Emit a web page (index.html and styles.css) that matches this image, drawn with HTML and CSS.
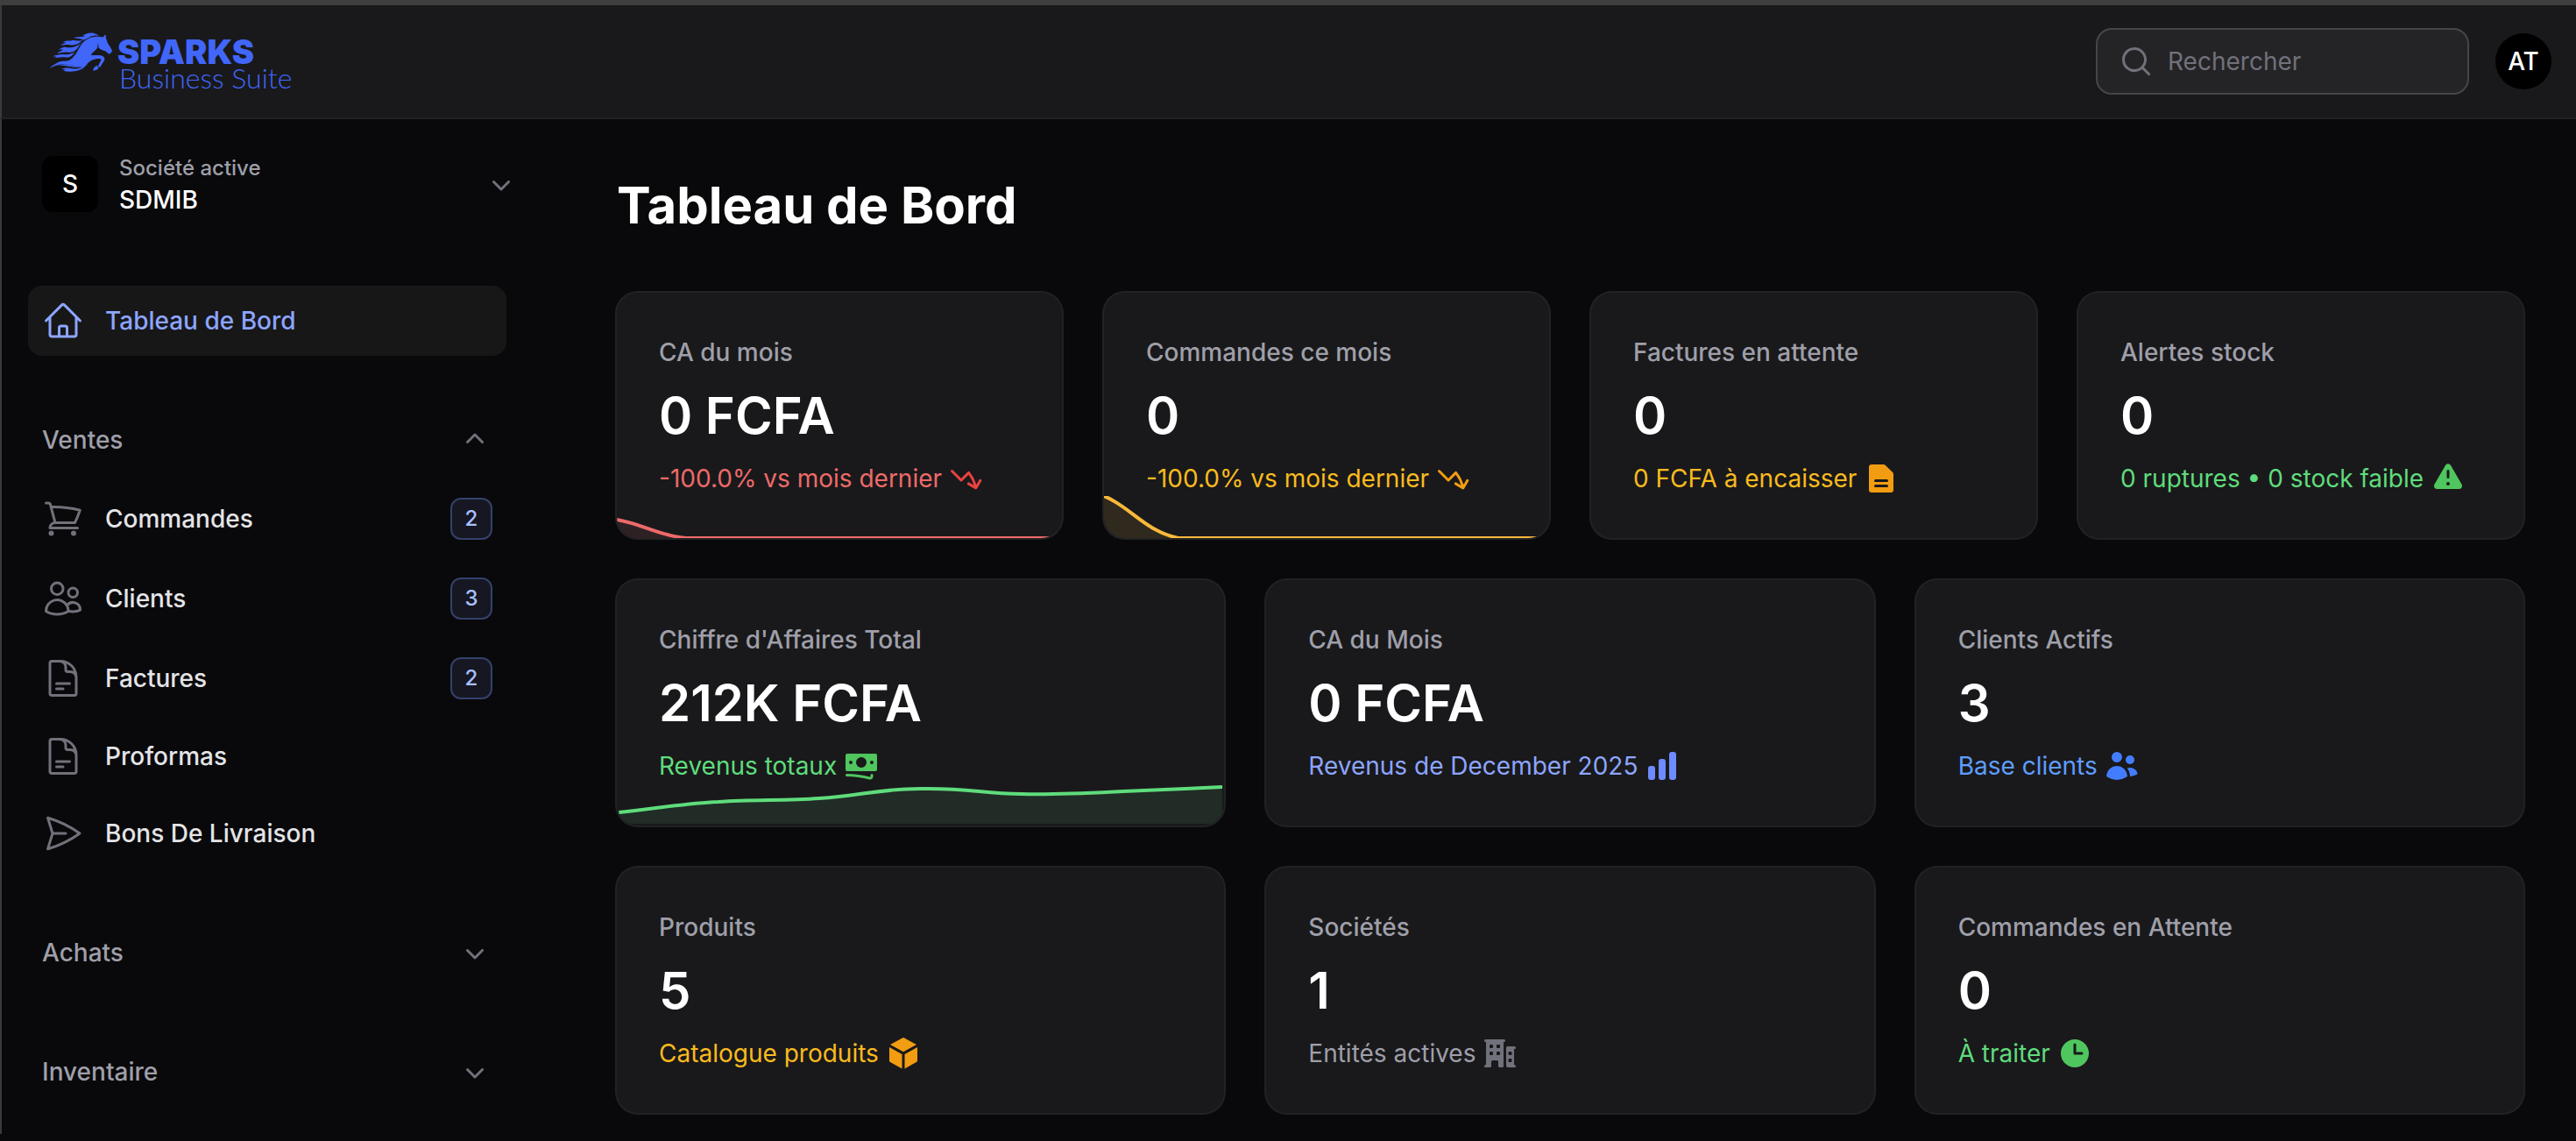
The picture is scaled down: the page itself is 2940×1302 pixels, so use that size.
FILE: index.html
```html
<!DOCTYPE html>
<html lang="fr">
<head>
    <meta charset="UTF-8">
    <meta name="viewport" content="width=device-width, initial-scale=1.0">
    <title>Tableau de Bord - Sparks Business Suite</title>
    <link rel="stylesheet" href="styles.css">
</head>
<body>
    <svg class="icon-defs" aria-hidden="true">
        <symbol id="chevron-down" viewBox="0 0 20 20">
            <path d="M5.22 8.22a.75.75 0 0 1 1.06 0L10 11.94l3.72-3.72a.75.75 0 1 1 1.06 1.06l-4.25 4.25a.75.75 0 0 1-1.06 0L5.22 9.28a.75.75 0 0 1 0-1.06Z"/>
        </symbol>
        <symbol id="chevron-up" viewBox="0 0 20 20">
            <path d="M9.47 6.47a.75.75 0 0 1 1.06 0l4.25 4.25a.75.75 0 1 1-1.06 1.06L10 8.06l-3.72 3.72a.75.75 0 0 1-1.06-1.06l4.25-4.25Z"/>
        </symbol>
        <symbol id="trending-down" viewBox="0 0 20 20">
            <path d="M1.22 5.222a.75.75 0 0 1 1.06 0L7 9.942l3.768-3.769a.75.75 0 0 1 1.113.058 20.908 20.908 0 0 1 3.813 7.254l1.574-2.727a.75.75 0 0 1 1.3.75l-2.475 4.286a.75.75 0 0 1-1.025.275l-4.287-2.475a.75.75 0 0 1 .75-1.3l2.71 1.565a19.422 19.422 0 0 0-3.013-6.024L7.53 11.533a.75.75 0 0 1-1.06 0l-5.25-5.25a.75.75 0 0 1 0-1.06Z"/>
        </symbol>
        <symbol id="document" viewBox="0 0 24 24">
            <path d="M19.5 14.25v-2.625a3.375 3.375 0 0 0-3.375-3.375h-1.5A1.125 1.125 0 0 1 13.5 7.125v-1.5a3.375 3.375 0 0 0-3.375-3.375H8.25m0 12.75h7.5m-7.5 3H12M10.5 2.25H5.625c-.621 0-1.125.504-1.125 1.125v17.25c0 .621.504 1.125 1.125 1.125h12.75c.621 0 1.125-.504 1.125-1.125V11.25a9 9 0 0 0-9-9Z"/>
        </symbol>
    </svg>

    <header class="topbar">
        <a class="logo" href="#">
            <svg class="logo-mark" viewBox="20 20 222 142" aria-hidden="true">
                <path d="M212 31 L215 32 L215 42 C218 49 219 55 223 62 C228 70 233 77 236 84 C237 89 235 92 232 93 C230 97 226 98 222 95 C217 89 211 85 203 84 C198 82 193 79 189 75 C191 70 190 65 186 61 C188 68 187 75 182 82 C175 88 168 94 163 101 C176 102 190 101 201 103 C209 106 213 112 210 119 C206 127 200 134 196 142 L190 141 L188 150 L172 156 C170 149 174 144 179 140 L185 137 L188 142 C189 133 196 126 199 117 C195 111 181 115 172 117 C158 121 150 136 137 139 C118 142 99 134 80 134 C65 133 55 132 43 133 C55 125 70 126 84 122 C95 117 103 108 112 96 C122 81 128 62 145 50 C160 39 183 34 205 40 Z"/>
                <path d="M192 35 C182 28 174 24 160 25 C147 25 142 32 132 33 L143 35 C136 40 123 37 105 41 C117 46 125 43 132 47 C151 49 156 35 175 34 C182 33 188 34 192 35 Z"/>
                <path d="M165 38 C153 38 145 46 133 50 C120 54 105 48 94 52 C82 51 72 51 67 58 L79 57 C72 61 63 63 58 67 C72 67 83 63 96 67 C115 68 124 59 133 52 C143 47 152 42 165 38 Z"/>
                <path d="M131 58 C119 70 106 74 91 75 C82 77 72 71 64 76 L52 82 L68 82 C62 89 53 89 47 95 C61 94 72 89 87 92 C105 91 115 83 121 71 Z"/>
                <path d="M110 87 C101 98 86 99 74 99 C56 97 47 101 31 105 L46 106 L37 111 C55 110 67 108 78 109 C93 110 103 100 110 87 Z"/>
                <path d="M92 119 C75 124 56 120 47 128 C39 134 29 136 22 146 C36 140 45 134 60 136 C85 137 107 147 134 142 C119 150 104 149 90 146 C80 145 70 147 61 149 L75 151 L68 155 C86 160 108 158 123 153 C137 148 145 139 153 130 C137 141 116 139 98 136 C79 132 61 135 46 132 C62 126 79 129 92 119 Z"/>
            </svg>
            <span class="logo-text">
                <span class="logo-name">SPARKS</span>
                <span class="logo-suite">Business Suite</span>
            </span>
        </a>
        <div class="topbar-end">
            <label class="search">
                <svg class="icon" viewBox="0 0 20 20" aria-hidden="true">
                    <path fill-rule="evenodd" d="M9 3.5a5.5 5.5 0 1 0 0 11 5.5 5.5 0 0 0 0-11ZM2 9a7 7 0 1 1 12.452 4.391l3.328 3.329a.75.75 0 1 1-1.06 1.06l-3.329-3.328A7 7 0 0 1 2 9Z"/>
                </svg>
                <input type="search" placeholder="Rechercher" aria-label="Rechercher">
            </label>
            <button class="avatar" type="button">AT</button>
        </div>
    </header>

    <div class="layout">
        <aside class="sidebar">
            <button class="tenant" type="button">
                <span class="tenant-avatar">S</span>
                <span class="tenant-text">
                    <span class="tenant-label">Société active</span>
                    <span class="tenant-name">SDMIB</span>
                </span>
                <svg class="icon" aria-hidden="true"><use href="#chevron-down"/></svg>
            </button>

            <nav class="nav">
                <a class="nav-item active" href="#">
                    <svg class="nav-icon" viewBox="0 0 24 24" aria-hidden="true">
                        <path d="m2.25 12 8.954-8.955c.44-.439 1.152-.439 1.591 0L21.75 12M4.5 9.75v10.125c0 .621.504 1.125 1.125 1.125H9.75v-4.875c0-.621.504-1.125 1.125-1.125h2.25c.621 0 1.125.504 1.125 1.125V21h4.125c.621 0 1.125-.504 1.125-1.125V9.75M8.25 21h8.25"/>
                    </svg>
                    <span>Tableau de Bord</span>
                </a>

                <div class="nav-group">
                    <button class="nav-heading" type="button" aria-expanded="true">
                        <span>Ventes</span>
                        <svg class="icon" aria-hidden="true"><use href="#chevron-up"/></svg>
                    </button>
                    <a class="nav-item has-badge" href="#">
                        <svg class="nav-icon" viewBox="0 0 24 24" aria-hidden="true">
                            <path d="M2.25 3h1.386c.51 0 .955.343 1.087.835l.383 1.437M7.5 14.25a3 3 0 0 0-3 3h15.75m-12.75-3h11.218c1.121-2.3 2.1-4.684 2.924-7.138a60.114 60.114 0 0 0-16.536-1.84M7.5 14.25 5.106 5.272M6 20.25a.75.75 0 1 1-1.5 0 .75.75 0 0 1 1.5 0Zm12.75 0a.75.75 0 1 1-1.5 0 .75.75 0 0 1 1.5 0Z"/>
                        </svg>
                        <span>Commandes</span>
                        <span class="badge">2</span>
                    </a>
                    <a class="nav-item has-badge" href="#">
                        <svg class="nav-icon" viewBox="0 0 24 24" aria-hidden="true">
                            <path d="M15 19.128a9.38 9.38 0 0 0 2.625.372 9.337 9.337 0 0 0 4.121-.952 4.125 4.125 0 0 0-7.533-2.493M15 19.128v-.003c0-1.113-.285-2.16-.786-3.07M15 19.128v.106A12.318 12.318 0 0 1 8.624 21c-2.331 0-4.512-.645-6.374-1.766l-.001-.109a6.375 6.375 0 0 1 11.964-3.07M12 6.375a3.375 3.375 0 1 1-6.75 0 3.375 3.375 0 0 1 6.75 0Zm8.25 2.25a2.625 2.625 0 1 1-5.25 0 2.625 2.625 0 0 1 5.25 0Z"/>
                        </svg>
                        <span>Clients</span>
                        <span class="badge">3</span>
                    </a>
                    <a class="nav-item has-badge" href="#">
                        <svg class="nav-icon" aria-hidden="true"><use href="#document"/></svg>
                        <span>Factures</span>
                        <span class="badge">2</span>
                    </a>
                    <a class="nav-item" href="#">
                        <svg class="nav-icon" aria-hidden="true"><use href="#document"/></svg>
                        <span>Proformas</span>
                    </a>
                    <a class="nav-item" href="#">
                        <svg class="nav-icon" viewBox="0 0 24 24" aria-hidden="true">
                            <path d="M6 12 3.269 3.125A59.769 59.769 0 0 1 21.485 12 59.768 59.768 0 0 1 3.27 20.875L5.999 12Zm0 0h7.5"/>
                        </svg>
                        <span>Bons De Livraison</span>
                    </a>
                </div>

                <button class="nav-heading" type="button" aria-expanded="false">
                    <span>Achats</span>
                    <svg class="icon" aria-hidden="true"><use href="#chevron-down"/></svg>
                </button>

                <button class="nav-heading" type="button" aria-expanded="false">
                    <span>Inventaire</span>
                    <svg class="icon" aria-hidden="true"><use href="#chevron-down"/></svg>
                </button>
            </nav>
        </aside>

        <main class="main">
            <h1>Tableau de Bord</h1>

            <section class="stats stats-4">
                <article class="card danger">
                    <h2>CA du mois</h2>
                    <p class="value">0 FCFA</p>
                    <p class="description">
                        <span>-100.0% vs mois dernier</span>
                        <svg class="icon" aria-hidden="true"><use href="#trending-down"/></svg>
                    </p>
                    <svg class="chart" viewBox="0 0 600 48" preserveAspectRatio="none" aria-hidden="true">
                        <path class="chart-fill" d="M0 27 C35 32 65 48 100 48 H0 Z"/>
                        <path class="chart-line" d="M0 27 C35 32 65 48 100 48 H600"/>
                    </svg>
                </article>
                <article class="card warning">
                    <h2>Commandes ce mois</h2>
                    <p class="value">0</p>
                    <p class="description">
                        <span>-100.0% vs mois dernier</span>
                        <svg class="icon" aria-hidden="true"><use href="#trending-down"/></svg>
                    </p>
                    <svg class="chart" viewBox="0 0 600 48" preserveAspectRatio="none" aria-hidden="true">
                        <path class="chart-fill" d="M0 0 C35 12 55 40 100 48 H0 Z"/>
                        <path class="chart-line" d="M0 0 C35 12 55 40 100 48 H600"/>
                    </svg>
                </article>
                <article class="card warning">
                    <h2>Factures en attente</h2>
                    <p class="value">0</p>
                    <p class="description">
                        <span>0 FCFA à encaisser</span>
                        <svg class="icon" viewBox="0 0 20 20" aria-hidden="true">
                            <path fill-rule="evenodd" d="M4.5 2A1.5 1.5 0 0 0 3 3.5v13A1.5 1.5 0 0 0 4.5 18h11a1.5 1.5 0 0 0 1.5-1.5V7.621a1.5 1.5 0 0 0-.44-1.06l-4.12-4.122A1.5 1.5 0 0 0 11.378 2H4.5Zm2.25 8.5a.75.75 0 0 0 0 1.5h6.5a.75.75 0 0 0 0-1.5h-6.5Zm0 3a.75.75 0 0 0 0 1.5h6.5a.75.75 0 0 0 0-1.5h-6.5Z"/>
                        </svg>
                    </p>
                </article>
                <article class="card success">
                    <h2>Alertes stock</h2>
                    <p class="value">0</p>
                    <p class="description">
                        <span>0 ruptures • 0 stock faible</span>
                        <svg class="icon" viewBox="0 0 20 20" aria-hidden="true">
                            <path fill-rule="evenodd" d="M8.485 2.495c.673-1.167 2.357-1.167 3.03 0l6.28 10.875c.673 1.167-.17 2.625-1.516 2.625H3.72c-1.347 0-2.189-1.458-1.515-2.625L8.485 2.495ZM10 5a.75.75 0 0 1 .75.75v3.5a.75.75 0 0 1-1.5 0v-3.5A.75.75 0 0 1 10 5Zm0 9a1 1 0 1 0 0-2 1 1 0 0 0 0 2Z"/>
                        </svg>
                    </p>
                </article>
            </section>

            <section class="stats stats-3">
                <article class="card success">
                    <h2>Chiffre d'Affaires Total</h2>
                    <p class="value">212K FCFA</p>
                    <p class="description">
                        <span>Revenus totaux</span>
                        <svg class="icon" viewBox="0 0 20 20" aria-hidden="true">
                            <path fill-rule="evenodd" d="M1 4a1 1 0 0 1 1-1h16a1 1 0 0 1 1 1v8a1 1 0 0 1-1 1H2a1 1 0 0 1-1-1V4Zm12 4a3 3 0 1 1-6 0 3 3 0 0 1 6 0ZM4 9a1 1 0 1 0 0-2 1 1 0 0 0 0 2Zm13-1a1 1 0 1 1-2 0 1 1 0 0 1 2 0ZM1.75 14.5a.75.75 0 0 0 0 1.5c4.417 0 8.693.603 12.749 1.73 1.111.309 2.251-.512 2.251-1.696v-.784a.75.75 0 0 0-1.5 0v.784a.272.272 0 0 1-.35.25A49.043 49.043 0 0 0 1.75 14.5Z"/>
                        </svg>
                    </p>
                    <svg class="chart" viewBox="0 0 600 48" preserveAspectRatio="none" aria-hidden="true">
                        <path class="chart-fill" d="M2 33 C35 29 65 23 100 21 C135 18 165 20 200 17 C240 14 260 6 300 6 C350 5 360 12 400 12 C435 13 465 11 500 9 C535 7 565 6 598 4 V46 H2 Z"/>
                        <path class="chart-line" d="M2 33 C35 29 65 23 100 21 C135 18 165 20 200 17 C240 14 260 6 300 6 C350 5 360 12 400 12 C435 13 465 11 500 9 C535 7 565 6 598 4"/>
                    </svg>
                </article>
                <article class="card primary">
                    <h2>CA du Mois</h2>
                    <p class="value">0 FCFA</p>
                    <p class="description">
                        <span>Revenus de December 2025</span>
                        <svg class="icon" viewBox="0 0 20 20" aria-hidden="true">
                            <path d="M15.5 2A1.5 1.5 0 0 0 14 3.5v13a1.5 1.5 0 0 0 1.5 1.5h1a1.5 1.5 0 0 0 1.5-1.5v-13A1.5 1.5 0 0 0 16.5 2h-1ZM9.5 6A1.5 1.5 0 0 0 8 7.5v9A1.5 1.5 0 0 0 9.5 18h1a1.5 1.5 0 0 0 1.5-1.5v-9A1.5 1.5 0 0 0 10.5 6h-1ZM3.5 10A1.5 1.5 0 0 0 2 11.5v5A1.5 1.5 0 0 0 3.5 18h1A1.5 1.5 0 0 0 6 16.5v-5A1.5 1.5 0 0 0 4.5 10h-1Z"/>
                        </svg>
                    </p>
                </article>
                <article class="card info">
                    <h2>Clients Actifs</h2>
                    <p class="value">3</p>
                    <p class="description">
                        <span>Base clients</span>
                        <svg class="icon" viewBox="0 0 20 20" aria-hidden="true">
                            <path d="M7 8a3 3 0 1 0 0-6 3 3 0 0 0 0 6ZM14.5 9a2.5 2.5 0 1 0 0-5 2.5 2.5 0 0 0 0 5ZM1.615 16.428a1.224 1.224 0 0 1-.569-1.175 6.002 6.002 0 0 1 11.908 0c.058.467-.172.92-.57 1.174A9.953 9.953 0 0 1 7 18a9.953 9.953 0 0 1-5.385-1.572ZM14.5 16h-.106c.07-.297.088-.611.048-.933a7.47 7.47 0 0 0-1.588-3.755 4.502 4.502 0 0 1 5.874 2.636.818.818 0 0 1-.36.98A7.465 7.465 0 0 1 14.5 16Z"/>
                        </svg>
                    </p>
                </article>
                <article class="card warning">
                    <h2>Produits</h2>
                    <p class="value">5</p>
                    <p class="description">
                        <span>Catalogue produits</span>
                        <svg class="icon" viewBox="0 0 20 20" aria-hidden="true">
                            <path d="M10.362 1.093a.75.75 0 0 0-.724 0L2.523 5.018 10 9.143l7.477-4.125-7.115-3.925ZM18 6.443l-7.25 4v8.25l6.862-3.786A.75.75 0 0 0 18 14.25V6.443ZM9.25 18.693v-8.25l-7.25-4v7.807a.75.75 0 0 0 .388.657l6.862 3.786Z"/>
                        </svg>
                    </p>
                </article>
                <article class="card gray">
                    <h2>Sociétés</h2>
                    <p class="value">1</p>
                    <p class="description">
                        <span>Entités actives</span>
                        <svg class="icon" viewBox="0 0 20 20" aria-hidden="true">
                            <path fill-rule="evenodd" d="M1 2.75A.75.75 0 0 1 1.75 2h10.5a.75.75 0 0 1 0 1.5H12v13.75a.75.75 0 0 1-.75.75h-1.5a.75.75 0 0 1-.75-.75v-2.5a.75.75 0 0 0-.75-.75h-2.5a.75.75 0 0 0-.75.75v2.5a.75.75 0 0 1-.75.75h-2.5a.75.75 0 0 1 0-1.5H2v-13h-.25A.75.75 0 0 1 1 2.75ZM4 5.5a.5.5 0 0 1 .5-.5h1a.5.5 0 0 1 .5.5v1a.5.5 0 0 1-.5.5h-1a.5.5 0 0 1-.5-.5v-1ZM4.5 9a.5.5 0 0 0-.5.5v1a.5.5 0 0 0 .5.5h1a.5.5 0 0 0 .5-.5v-1a.5.5 0 0 0-.5-.5h-1ZM8 5.5a.5.5 0 0 1 .5-.5h1a.5.5 0 0 1 .5.5v1a.5.5 0 0 1-.5.5h-1a.5.5 0 0 1-.5-.5v-1ZM8.5 9a.5.5 0 0 0-.5.5v1a.5.5 0 0 0 .5.5h1a.5.5 0 0 0 .5-.5v-1a.5.5 0 0 0-.5-.5h-1ZM14.25 6a.75.75 0 0 0-.75.75V17a1 1 0 0 0 1 1h3.75a.75.75 0 0 0 0-1.5H18v-9h.25a.75.75 0 0 0 0-1.5h-4Zm.5 3.5a.5.5 0 0 1 .5-.5h1a.5.5 0 0 1 .5.5v1a.5.5 0 0 1-.5.5h-1a.5.5 0 0 1-.5-.5v-1Zm.5 3.5a.5.5 0 0 0-.5.5v1a.5.5 0 0 0 .5.5h1a.5.5 0 0 0 .5-.5v-1a.5.5 0 0 0-.5-.5h-1Z"/>
                        </svg>
                    </p>
                </article>
                <article class="card success">
                    <h2>Commandes en Attente</h2>
                    <p class="value">0</p>
                    <p class="description">
                        <span>À traiter</span>
                        <svg class="icon" viewBox="0 0 20 20" aria-hidden="true">
                            <path fill-rule="evenodd" d="M10 18a8 8 0 1 0 0-16 8 8 0 0 0 0 16Zm.75-13a.75.75 0 0 0-1.5 0v5c0 .414.336.75.75.75h4a.75.75 0 0 0 0-1.5h-3.25V5Z"/>
                        </svg>
                    </p>
                </article>
            </section>
        </main>
    </div>
</body>
</html>
```

FILE: styles.css
```css
* {
    box-sizing: border-box;
}
body {
    margin: 0;
    min-height: 100vh;
    border-top: 6px solid #3f3f3f;
    background-color: #09090b;
    color: #ffffff;
    font-family: Inter, sans-serif;
    font-size: 28px;
    line-height: 40px;
}
h1, h2, p {
    margin: 0;
}
a {
    color: inherit;
    text-decoration: none;
}
button {
    border: none;
    background: none;
    color: inherit;
    font: inherit;
    text-align: left;
    cursor: pointer;
}
.icon-defs {
    display: none;
}
.icon {
    flex: none;
    width: 40px;
    height: 40px;
    fill: #71717b;
}

/* Top bar */
.topbar {
    display: flex;
    align-items: center;
    justify-content: space-between;
    height: 130px;
    padding: 0 28px 0 54px;
    border-bottom: 2px solid #222224;
    border-left: 2px solid #3a3a3a;
    background-color: #19191b;
}
.logo {
    display: flex;
    align-items: flex-start;
    gap: 4px;
    color: #4166fa;
}
.logo-mark {
    width: 74px;
    height: 47px;
    fill: currentColor;
}
.logo-text {
    display: flex;
    flex-direction: column;
    padding-top: 8px;
}
.logo-name {
    font-size: 38px;
    font-weight: 900;
    line-height: 30px;
}
.logo-suite {
    padding-left: 2px;
    font-family: Lato, sans-serif;
    font-size: 32px;
    font-weight: 300;
    line-height: 30px;
}
.topbar-end {
    display: flex;
    align-items: center;
    gap: 30px;
}
.search {
    display: flex;
    align-items: center;
    gap: 16px;
    width: 426px;
    height: 76px;
    padding: 0 24px;
    border: 2px solid #464649;
    border-radius: 18px;
    background-color: #242427;
}
.search input {
    flex: 1;
    min-width: 0;
    padding: 0;
    border: none;
    outline: none;
    background: none;
    color: #ffffff;
    font: inherit;
}
.search input::placeholder {
    color: #71717b;
}
.avatar {
    width: 64px;
    height: 64px;
    padding: 0;
    border-radius: 50%;
    background-color: #000000;
    font-weight: 500;
    text-align: center;
}

/* Sidebar */
.layout {
    display: flex;
    border-left: 2px solid #3a3a3a;
}
.sidebar {
    flex: none;
    width: 636px;
    padding: 26px 30px 24px;
}
.tenant {
    display: flex;
    align-items: center;
    gap: 24px;
    width: 100%;
    padding: 12px 16px;
}
.tenant-avatar {
    width: 64px;
    height: 64px;
    border-radius: 12px;
    background-color: #000000;
    font-weight: 500;
    line-height: 64px;
    text-align: center;
}
.tenant-text {
    display: flex;
    flex: 1;
    flex-direction: column;
    font-weight: 500;
    line-height: 36px;
}
.tenant-label {
    color: #9f9fa9;
    font-size: 24px;
}
.nav {
    display: flex;
    flex-direction: column;
    gap: 56px;
    padding: 68px 30px 0 0;
}
.nav-group {
    display: flex;
    flex-direction: column;
    gap: 8px;
}
.nav-item {
    display: flex;
    align-items: center;
    gap: 24px;
    min-height: 80px;
    padding: 0 16px;
    border-radius: 16px;
    color: #e4e4e7;
    font-weight: 500;
}
.nav-item.has-badge {
    min-height: 83px;
}
.nav-item.active {
    background-color: #171718;
    color: #8da5ff;
}
.nav-icon {
    flex: none;
    width: 48px;
    height: 48px;
    fill: none;
    stroke: #71717b;
    stroke-width: 1.5;
    stroke-linecap: round;
    stroke-linejoin: round;
}
.active .nav-icon {
    stroke: currentColor;
}
.badge {
    min-width: 48px;
    height: 48px;
    margin-left: auto;
    border: 2px solid #34416a;
    border-radius: 12px;
    background-color: #161722;
    color: #a9c0ff;
    font-size: 24px;
    line-height: 44px;
    text-align: center;
}
.nav-heading {
    display: flex;
    align-items: center;
    justify-content: space-between;
    height: 80px;
    padding: 0 16px;
    color: #9f9fa9;
    font-weight: 500;
}

/* Dashboard */
.main {
    display: flex;
    flex: 1;
    flex-direction: column;
    gap: 48px;
    min-width: 0;
    padding: 62px 60px 24px 66px;
}
h1 {
    margin-bottom: 16px;
    font-size: 58px;
    font-weight: 700;
    line-height: 72px;
}
.stats {
    display: grid;
    gap: 48px;
}
.stats-4 {
    grid-template-columns: repeat(4, 1fr);
}
.stats-3 {
    grid-template-columns: repeat(3, 1fr);
}
.card {
    position: relative;
    display: flex;
    flex-direction: column;
    gap: 16px;
    padding: 48px;
    border-radius: 24px;
    background-color: #19191b;
    box-shadow: 0 0 0 2px #222224;
    overflow: hidden;
}
.card h2 {
    color: #9f9fa9;
    font-size: 28px;
    font-weight: 500;
    line-height: 40px;
}
.value {
    font-size: 58px;
    font-weight: 600;
    line-height: 72px;
}
.description {
    display: flex;
    align-items: center;
    gap: 8px;
}
.chart {
    position: absolute;
    bottom: 0;
    left: 0;
    width: 100%;
    height: 48px;
}
.chart-fill {
    fill: currentColor;
    opacity: 0.1;
}
.chart-line {
    fill: none;
    stroke: currentColor;
    stroke-width: 4;
    vector-effect: non-scaling-stroke;
}
.danger .description {
    color: #ee6a69;
}
.danger .description .icon {
    fill: #ec4240;
}
.danger .chart {
    color: #ee6a69;
}
.warning .description {
    color: #f9bb1e;
}
.warning .description .icon {
    fill: #f29c11;
}
.warning .chart {
    color: #f9b93a;
}
.success .description {
    color: #5fdc7c;
}
.success .description .icon {
    fill: #4fc65e;
}
.success .chart {
    color: #5fdc7c;
}
.primary .description {
    color: #8da5ff;
}
.primary .description .icon {
    fill: #6e8bff;
}
.info .description {
    color: #5f9dff;
}
.info .description .icon {
    fill: #437dff;
}
.gray .description {
    color: #9f9fa9;
}
```
